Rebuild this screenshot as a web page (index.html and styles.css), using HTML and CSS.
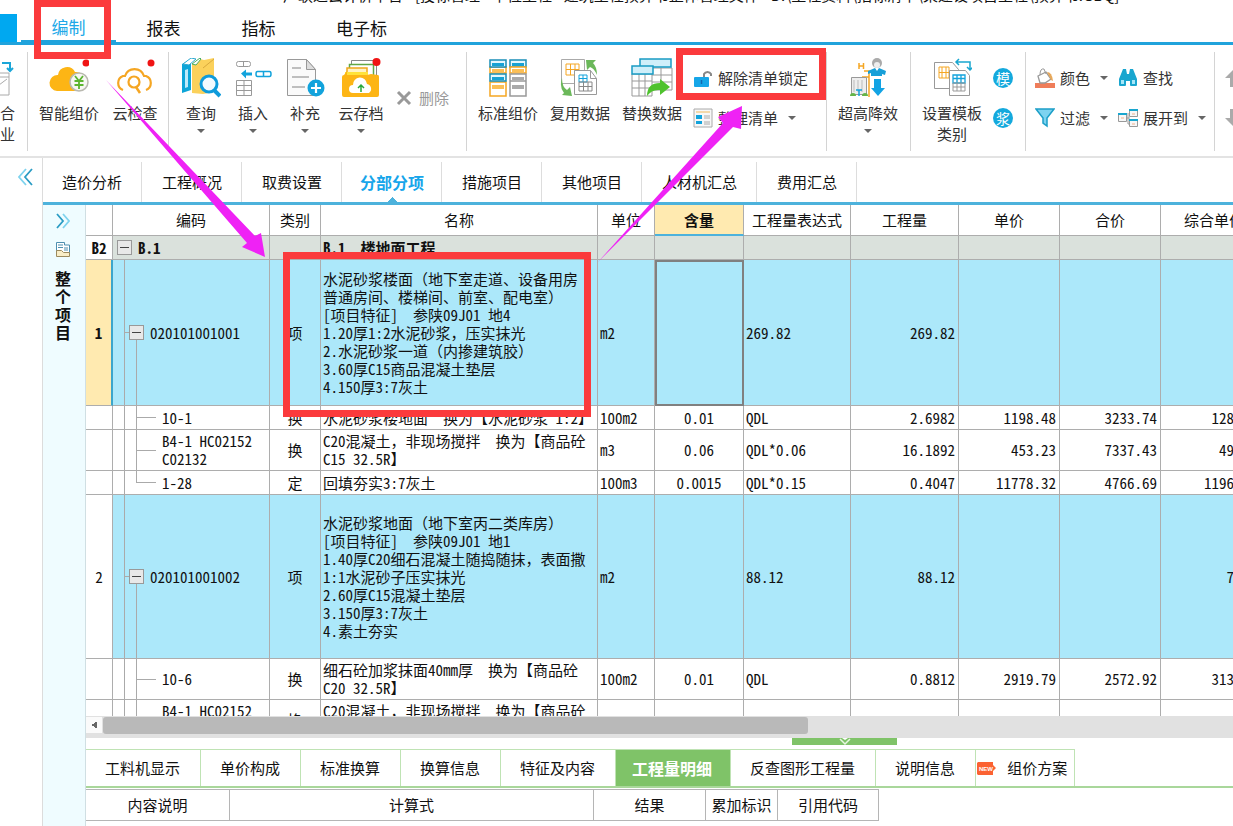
FILE: index.html
```html
<!DOCTYPE html>
<html lang="zh-CN">
<head>
<meta charset="utf-8">
<title>编制 - 分部分项</title>
<link rel="stylesheet" href="styles.css">
</head>
<body>
<header class="menubar">
  <div class="titletext">广联达云计价平台 - [投标管理 - 单位工程 - 建筑工程预算书整体管理文件 - D:\工程资料\招标清单\某建设项目工程\预算书.GBQ]</div>
  <nav class="menu">
    <button class="file" aria-label="文件"></button>
    <button class="menuitem active">编制</button>
    <button class="menuitem">报表</button>
    <button class="menuitem">指标</button>
    <button class="menuitem">电子标</button>
  </nav>
</header>

<section class="ribbon">
  <div class="group g0">
    <button class="big clipped">
      <svg width="38" height="38" viewBox="0 0 38 38"><path d="M6 20l8-6 18 0 0 22H6z" fill="#fff" stroke="#aaa"/><path d="M25 4h8v8m-3-3 3 3 3-3" fill="none" stroke="#1ba6d8" stroke-width="2"/><path d="M22 18h10M22 26l8-6" stroke="#aaa" fill="none"/></svg>
      <span>综合</span><span>专业</span>
    </button>
  </div>
  <div class="group g1">
    <button class="big w4">
      <svg width="40" height="38" viewBox="0 0 40 38"><path d="M8 32a8 8 0 0 1 1-16 9 9 0 0 1 17-3 9 9 0 0 1 2 19z" fill="#fdb515"/><circle cx="30" cy="23" r="9" fill="#f7f7f3" stroke="#b9b9b0" stroke-width="1.5"/><path d="M26 17l4 5 4-5M25.500 22h9M25.500 26h9M30 22v8" fill="none" stroke="#5cb531" stroke-width="1.800"/><circle cx="37" cy="4" r="3.500" fill="#f01414"/></svg>
      <span>智能组价</span>
    </button>
    <button class="big w3">
      <svg width="40" height="38" viewBox="0 0 40 38"><path d="M8 31a7.500 7.500 0 0 1 0-14h2a10 10 0 0 1 19 0h2a7.500 7.500 0 0 1 0 14" fill="none" stroke="#f5a623" stroke-width="2.200"/><circle cx="19" cy="23" r="5.500" fill="none" stroke="#f5a623" stroke-width="2.200"/><path d="M21 28l4 6" stroke="#f5a623" stroke-width="2.500"/><circle cx="36" cy="4" r="3.500" fill="#f01414"/></svg>
      <span>云检查</span>
    </button>
  </div>
  <div class="group g2">
    <button class="big w2">
      <svg width="40" height="40" viewBox="0 0 40 40"><path d="M1 6l9-5v31l-9 3z" fill="#0da5d8"/><path d="M4 12l3-1v18l-3 1z" fill="#bdeafa"/><path d="M2 6l8-6 5 1-7 6z" fill="#fff" stroke="#2da9d0"/><path d="M11 6l8-5 4 1 10-2v34l-11 2-11-1z" fill="#fbd15b"/><path d="M11 6l8-6 1 1-5 6z" fill="#fff" stroke="#4aae61"/><path d="M22 10L33 1" stroke="#d9a93d"/><circle cx="28" cy="26" r="8" fill="#f3fbff" stroke="#0f9bdb" stroke-width="3"/><path d="M33 32l6 6" stroke="#0f9bdb" stroke-width="4"/></svg>
      <span>查询</span><i class="caret"></i>
    </button>
    <button class="big w2">
      <svg width="40" height="40" viewBox="0 0 40 40" fill="none" stroke="#999"><rect x="3.500" y="3.500" width="14" height="5" rx="2"/><path d="M10.500 3.500v5"/><path d="M8 15.500l5-4v3h6v3h-6v3z" fill="#12a3dc" stroke="none"/><path d="M24.500 13.500h12q1.500 0 1.500 2.500t-1.500 2.500h-12q-1.500 0-1.500-2.500t1.500-2.500zM30.500 13.500v5" stroke="#12a3dc" stroke-width="1.500"/><path d="M3.500 22.500h15v15h-15zM3.500 27.500h15M3.500 32.500h15M11 22.500v15"/></svg>
      <span>插入</span><i class="caret"></i>
    </button>
    <button class="big w2">
      <svg width="40" height="40" viewBox="0 0 40 40"><path d="M2.500 1.500h19l9 10v26h-28z" fill="#fafafa" stroke="#999"/><path d="M21.500 1.500v10h9z" fill="#ddd" stroke="#999"/><path d="M7 10h9M7 19h17M7 29h13" stroke="#aaa" stroke-width="1.500"/><circle cx="31" cy="30" r="8.500" fill="#12a3dc"/><path d="M26 30h10M31 25v10" stroke="#fff" stroke-width="2.200"/></svg>
      <span>补充</span><i class="caret"></i>
    </button>
    <button class="big w3">
      <svg width="40" height="40" viewBox="0 0 40 40"><path d="M10.500 15V2.500h25V18" fill="#fff" stroke="#888"/><path d="M8.500 18V6.500h24V19" fill="#fff" stroke="#61a744" stroke-width="1.500"/><path d="M6 18V10h20v8" fill="#fff3c4" stroke="#f0a61b" stroke-width="1.500"/><path d="M4 14h23v5H4z" fill="#ffe23a"/><path d="M1 19q0-2 2-2l3-4v4h20l4-1 7 1q1 0 1 2v18q0 2-2 2H3q-2 0-2-2z" fill="#fdb515"/><path d="M12 35a4 4 0 0 1 0-8 7 7 0 0 1 14-1 5 5 0 0 1 2 9z" fill="#fff"/><path d="M20 34v-7m-3 3 3-3 3 3" fill="none" stroke="#28a83c" stroke-width="1.500"/><circle cx="35.500" cy="4" r="4" fill="#f01414"/></svg>
      <span>云存档</span><i class="caret"></i>
    </button>
    <div class="stack single">
      <button class="small dim"><svg width="18" height="18" viewBox="0 0 18 18"><path d="M3 3l12 12M15 3L3 15" stroke="#999" stroke-width="3"/></svg><span>删除</span></button>
    </div>
  </div>
  <div class="group g3">
    <button class="big w4">
      <svg width="40" height="40" viewBox="0 0 40 40" fill="#fff" stroke-width="1.500"><path d="M2 24h16v14H2zM2 9h16v6H2z" stroke="#f5a623"/><path d="M2 2h16v7H2zM2 16h16v7H2z" fill="#e5f7fd" stroke="#1a8fb8"/><path d="M4 5h12v3H4zM4 19h12v3H4z" fill="#17a2d4"/><path d="M4 11h12v3H4zM4 27h12v4H4z" fill="#fbbf55"/><path d="M22 2h16v7H22z" fill="#e5f7fd" stroke="#1a8fb8"/><path d="M22 9h16v6H22z" stroke="#f5a623"/><path d="M22 16h16v7H22zM22 23h16v15H22z" stroke="#999"/><path d="M24 5h12v3H24z" fill="#17a2d4"/><path d="M24 11h12v3H24z" fill="#fbbf55"/><path d="M24 19h12v3H24zM24 27h12v4H24z" fill="#aaa"/></svg>
      <span>标准组价</span>
    </button>
    <button class="big w4">
      <svg width="40" height="40" viewBox="0 0 40 40"><path d="M1.500 1.500h23v24h-23z" fill="#fff" stroke="#aaa"/><path d="M6 6h13v11H6zM10.500 6v11M15 6v11M6 11.500h13" fill="none" stroke="#f5a623"/><path d="M14.500 12.500h16l6 8v16h-22z" fill="#fff" stroke="#999"/><path d="M30.500 12.500v8h6" fill="none" stroke="#999"/><path d="M19 17h8v7h-8zM23 17v7M19 20.500h8" fill="none" stroke="#12a3dc"/><path d="M19 24h13v9H19zM23.500 24v9M28 24v9M19 28.500h13" fill="none" stroke="#888"/><path d="M26 2l10 0-3 3q4 4 4 12-3-7-7-8l-3 3z" fill="#6bb85a"/><path d="M2 20q0 9 5 12l3-3 2 9-10-1 2-2q-5-6-2-15z" fill="#6bb85a"/></svg>
      <span>复用数据</span>
    </button>
    <button class="big w4">
      <svg width="42" height="40" viewBox="0 0 42 40"><path d="M9 10h32v22H9zM19 10v22M30 10v22M9 17h32M9 24h32" fill="#fff" stroke="#999"/><path d="M1 16h20v22H1zM8 16v22M14 16v22M1 23h20M1 30h20" fill="#fff" stroke="#999"/><path d="M9 1h31v8H9z" fill="#cfeffa" stroke="#1a9cc4" stroke-width="1.500"/><path d="M1 8h21v8H1z" fill="#cfeffa" stroke="#1a9cc4" stroke-width="1.500"/><path d="M16 38q0-13 13-13v-4l10 8-10 8v-5q-8-1-13 6z" fill="#4fc22e"/></svg>
      <span>替换数据</span>
    </button>
    <div class="stack">
      <button class="small"><svg width="20" height="20" viewBox="0 0 20 20"><path d="M11 10V6a4 4 0 0 1 7 0v2" fill="none" stroke="#888" stroke-width="2"/><rect x="1" y="9" width="15" height="10" rx="1" fill="#16a6e8"/><path d="M8.500 12v4" stroke="#1468b0" stroke-width="1.500"/></svg><span>解除清单锁定</span></button>
      <button class="small"><svg width="20" height="20" viewBox="0 0 20 20"><path d="M1 1h18v18H1z" fill="#f7f7f7" stroke="#aaa"/><path d="M3 4h14" stroke="#f0b95c"/><path d="M3 7h6v4H3zM3 13h6v3H3z" fill="#12a3dc"/><path d="M11 8h6M11 10h6M11 14h6M11 16h6" stroke="#aaa"/></svg><span>整理清单</span><i class="caret"></i></button>
    </div>
  </div>
  <div class="group g4">
    <button class="big w4">
      <svg width="40" height="40" viewBox="0 0 40 40"><path d="M11 5v6M15.500 5v6M11 8h4.500M16 13h5v26M14 19h7" fill="none" stroke="#f5a623" stroke-width="1.500"/><path d="M3.500 19.500h15v17h-15z" fill="#eee" stroke="#999"/><path d="M6 22v12M10 22v12M14 22v12" stroke="#bbb"/><path d="M8 32h6M11 32v6" stroke="#12a3dc" stroke-width="1.500"/><path d="M2 38a3 3 0 0 1 6 0zM14 38a3 3 0 0 1 6 0z" fill="#65b548"/><circle cx="29" cy="5" r="5" fill="#aaa"/><circle cx="29" cy="7" r="3" fill="#eee"/><path d="M20 13l7-3 2 3 2-3 7 3-1 4-3-1v2H23v-3l-3 1z" fill="#179fd8"/><path d="M26 21h7v9h4l-7 8-7-8h3z" fill="#12a3e4"/></svg>
      <span>超高降效</span><i class="caret"></i>
    </button>
  </div>
  <div class="group g5">
    <button class="big w4">
      <svg width="40" height="40" viewBox="0 0 40 40"><path d="M2.500 4.500h18l6 7v19h-24z" fill="#fff" stroke="#999"/><path d="M7 9h10v11H7zM10 9v11M14 9v11M7 14.500h10" fill="none" stroke="#f5a623"/><path d="M17.500 12.500h16l4 5v20h-20z" fill="#fff" stroke="#999"/><path d="M21 17h12v8H21zM25 17v8M29 17v8M21 20.500h12" fill="none" stroke="#12a3dc" stroke-width="1.300"/><path d="M21 25h12v8H21zM25 25v8M29 25v8M21 29h12" fill="none" stroke="#999"/><path d="M24 4h14v8M27 1l-3 3 3 3M35 9l3 3 3-3" fill="none" stroke="#19a6cf" stroke-width="1.500"/></svg>
      <span>设置模板</span><span>类别</span>
    </button>
    <div class="stack">
      <button class="small"><span class="round">模</span></button>
      <button class="small"><span class="round">浆</span></button>
    </div>
  </div>
  <div class="group g6">
    <div class="stack">
      <button class="small"><svg width="20" height="20" viewBox="0 0 20 20"><path d="M0 15h20v5H0z" fill="#ef7d5a"/><path d="M3 8l8-4 5 7-6 4H5z" fill="#fff" stroke="#999" stroke-width="1.300"/><path d="M5 7q0-7 4-6l2 5" fill="none" stroke="#999"/><path d="M12 4q5 0 6 9l-2-1z" fill="#e7a85b"/></svg><span>颜色</span><i class="caret"></i></button>
      <button class="small"><svg width="20" height="20" viewBox="0 0 20 20"><path d="M1 1h18l-7 9v8l-4-3v-5z" fill="#7ed3f0" stroke="#1c9fc8" stroke-width="1.500"/></svg><span>过滤</span><i class="caret"></i></button>
    </div>
    <div class="stack">
      <button class="small"><svg width="20" height="20" viewBox="0 0 20 20"><path d="M5 1h3l1 5h2l1-5h3l4 10v6q0 1-1 1h-5q-1 0-1-1v-4H8v4q0 1-1 1H2q-1 0-1-1v-6z" fill="#19a6cf"/><path d="M3 12h3v4H3zM14 12h3v4h-3z" fill="#a5e6f8"/></svg><span>查找</span></button>
      <button class="small"><svg width="20" height="20" viewBox="0 0 20 20"><path d="M9 10h3M10 5v11h3" fill="none" stroke="#999"/><path d="M.5 5.500h8v8h-8zM11.500 1.500h8v7h-8zM11.500 11.500h8v7h-8z" fill="#f7f7f7" stroke="#999"/><path d="M0 5h9v2H0zM11 1h9v2h-9zM11 11h9v2h-9z" fill="#19a6cf"/><path d="M3 10h3M14 6h3M14 16h3" stroke="#f0b08c"/></svg><span>展开到</span><i class="caret"></i></button>
    </div>
  </div>
  <div class="group g7">
    <div class="stack">
      <button class="small" aria-label="上移"><svg width="20" height="20" viewBox="0 0 20 20"><path d="M10 0l10 10h-5v9H5v-9H0z" fill="#aaa"/></svg></button>
      <button class="small" aria-label="下移"><svg width="20" height="20" viewBox="0 0 20 20"><path d="M10 20L0 10h5V1h10v9h5z" fill="#aaa"/></svg></button>
    </div>
  </div>
</section>

<main class="work">
  <aside class="gutter">
    <button aria-label="收起"><svg width="16" height="18" viewBox="0 0 16 18" fill="none" stroke-width="1.800"><path d="M8 1L1 9l7 8" stroke="#7fd3ee"/><path d="M14 1L7 9l7 8" stroke="#2a9cc4"/></svg></button>
  </aside>
  <div class="project">
    <nav class="tabs">
      <button>造价分析</button><button>工程概况</button><button>取费设置</button><button class="active">分部分项</button><button>措施项目</button><button>其他项目</button><button>人材机汇总</button><button>费用汇总</button>
    </nav>
    <div class="body">
      <aside class="side">
        <button aria-label="展开"><svg width="14" height="16" viewBox="0 0 14 16" fill="none" stroke-width="1.800"><path d="M1 1l6 7-6 7" stroke="#2a9cc4"/><path d="M7 1l6 7-6 7" stroke="#7fd3ee"/></svg></button>
        <svg width="16" height="16" viewBox="0 0 16 16"><path d="M1.500 12V1.500h8V4h5v8" fill="#fff" stroke="#4d8fb0"/><path d="M3 4h5M3 6.500h5M9 7h4M9 9h4" stroke="#4d8fb0"/><path d="M1.500 9.500h5l2 2h6v4h-13z" fill="#f9edc6" stroke="#9c8a5e"/></svg>
        <strong>整个项目</strong>
      </aside>
      <div class="content">
        <div class="gridpane">
          <table class="grid">
            <colgroup><col class="c1"><col class="c2"><col class="c3"><col class="c4"><col class="c5"><col class="c6"><col class="c7"><col class="c8"><col class="c9"><col class="c9"><col class="c7"></colgroup>
            <thead><tr><th></th><th>编码</th><th>类别</th><th>名称</th><th>单位</th><th class="hot">含量</th><th>工程量表达式</th><th>工程量</th><th>单价</th><th>合价</th><th>综合单价</th></tr></thead>
            <tbody>
              <tr class="section"><td class="no">B2</td><td class="code root"><div><button class="toggle" aria-label="折叠"></button>B.1</div></td><td></td><td class="name">B.1<span class="wide">　</span>楼地面工程</td><td></td><td></td><td></td><td></td><td></td><td></td><td></td></tr>
              <tr class="item first"><td class="no current">1</td><td class="code parent"><div><button class="toggle" aria-label="折叠"></button>020101001001</div></td><td class="mid">项</td><td class="name">水泥砂浆楼面<span class="wide">（</span>地下室走道、设备用房<br>普通房间、楼梯间、前室、配电室<span class="wide">）</span><br>[项目特征]<span class="wide">　</span>参陕09J01 地4<br>1.20厚1:2水泥砂浆<span class="wide">，</span>压实抹光<br>2.水泥砂浆一道<span class="wide">（</span>内掺建筑胶<span class="wide">）</span><br>3.60厚C15商品混凝土垫层<br>4.150厚3:7灰土</td><td>m2</td><td class="cursor"></td><td>269.82</td><td class="num">269.82</td><td></td><td></td><td></td></tr>
              <tr class="low"><td></td><td class="code child">10-1</td><td class="mid">换</td><td class="name">水泥砂浆楼地面<span class="wide">　</span>换为【水泥砂浆 1:2】</td><td>100m2</td><td class="mid">0.01</td><td>QDL</td><td class="num">2.6982</td><td class="num">1198.48</td><td class="num">3233.74</td><td class="num">1284.28</td></tr>
              <tr class="tall"><td></td><td class="code child">B4-1 HC02152<br>C02132</td><td class="mid">换</td><td class="name">C20混凝土<span class="wide">，</span>非现场搅拌<span class="wide">　</span>换为【商品砼<br>C15 32.5R】</td><td>m3</td><td class="mid">0.06</td><td>QDL*0.06</td><td class="num">16.1892</td><td class="num">453.23</td><td class="num">7337.43</td><td class="num">492.17</td></tr>
              <tr class="low"><td></td><td class="code child last">1-28</td><td class="mid">定</td><td class="name">回填夯实3:7灰土</td><td>100m3</td><td class="mid">0.0015</td><td>QDL*0.15</td><td class="num">0.4047</td><td class="num">11778.32</td><td class="num">4766.69</td><td class="num">11963.45</td></tr>
              <tr class="item second"><td class="no">2</td><td class="code parent"><div><button class="toggle" aria-label="折叠"></button>020101001002</div></td><td class="mid">项</td><td class="name">水泥砂浆地面<span class="wide">（</span>地下室丙二类库房<span class="wide">）</span><br>[项目特征]<span class="wide">　</span>参陕09J01 地1<br>1.40厚C20细石混凝土随捣随抹<span class="wide">，</span>表面撒<br>1:1水泥砂子压实抹光<br>2.60厚C15混凝土垫层<br>3.150厚3:7灰土<br>4.素土夯实</td><td>m2</td><td></td><td>88.12</td><td class="num">88.12</td><td></td><td></td><td class="num">78.56</td></tr>
              <tr class="tall"><td></td><td class="code child">10-6</td><td class="mid">换</td><td class="name">细石砼加浆抹面40mm厚<span class="wide">　</span>换为【商品砼<br>C20 32.5R】</td><td>100m2</td><td class="mid">0.01</td><td>QDL</td><td class="num">0.8812</td><td class="num">2919.79</td><td class="num">2572.92</td><td class="num">3131.46</td></tr>
              <tr class="tall"><td></td><td class="code child">B4-1 HC02152<br>C02132</td><td class="mid">换</td><td class="name">C20混凝土<span class="wide">，</span>非现场搅拌<span class="wide">　</span>换为【商品砼<br>C15 32.5R】</td><td></td><td></td><td></td><td></td><td></td><td></td><td></td></tr>
            </tbody>
          </table>
        </div>
        <div class="scroll"><button aria-label="向左滚动"></button><div class="thumb"></div></div>
        <div class="splitter"><button aria-label="折叠下方面板"><svg width="12" height="8" viewBox="0 0 12 8"><path d="M3 0h6L6 2z" fill="#fff"/><path d="M1 1l5 5 5-5" fill="none" stroke="#e8f7e2" stroke-width="1.500"/></svg></button></div>
        <nav class="detailtabs">
          <button>工料机显示</button><button>单价构成</button><button>标准换算</button><button>换算信息</button><button>特征及内容</button><button class="active">工程量明细</button><button>反查图形工程量</button><button>说明信息</button><button class="new"><svg width="19" height="13" viewBox="0 0 19 13"><path d="M1 0h15v3l3 3-3 3v4H1l-1-1V1z" fill="#fb6232"/><text x="2" y="9" class="newtext">NEW</text></svg>组价方案</button>
        </nav>
        <table class="detail">
          <colgroup><col class="d1"><col class="d2"><col class="d3"><col class="d4"><col class="d5"></colgroup>
          <tr><th>内容说明</th><th>计算式</th><th>结果</th><th>累加标识</th><th>引用代码</th></tr>
        </table>
      </div>
    </div>
  </div>
</main>

<svg class="marks" width="1233" height="826" viewBox="0 0 1233 826">
  <g fill="none" stroke="#fb3a3c" stroke-width="7"><path d="M37.500 3.500h70v52h-70z"/><path d="M679.500 51.500h143v45h-143z"/><path d="M286.500 255.500h301v158h-301z"/></g>
  <path d="M106 80L255 236l6-3 4 24-23-10 5-4z" fill="#ef22f5"/>
  <path d="M598 262L723 123l-5-6 24-11-1 23-8-2z" fill="#ef22f5"/>
</svg>
</body>
</html>
```
FILE: styles.css
```css
* { box-sizing: border-box; }
body {
  margin: 0;
  height: 100vh;
  display: flex;
  flex-direction: column;
  overflow: hidden;
  position: relative;
  background: #fff;
  color: #111;
  font: 15px/18px "Noto Sans CJK SC", sans-serif;
}
button {
  margin: 0;
  padding: 0;
  border: 0;
  background: none;
  color: inherit;
  font: inherit;
}
svg { display: block; flex: none; }

/* menu */
.menubar { flex: none; border-bottom: 3px solid #20a3dc; }
.titletext {
  height: 4px;
  margin-bottom: 10px;
  padding-left: 283px;
  overflow: hidden;
  display: flex;
  align-items: flex-end;
  white-space: nowrap;
}
.menu { display: flex; height: 28px; }
.file { width: 17px; background: #00a8f0; margin-right: 4px; }
.menuitem { width: 95px; font-size: 17px; }
.menuitem:last-child { width: 111px; }
.menuitem.active { color: #20a8e8; border-bottom: 2px solid #20a3dc; }

/* ribbon */
.ribbon {
  flex: none;
  display: flex;
  min-height: 113px;
  padding: 7px 0 5px;
  border-bottom: 2px solid #e3e3e3;
  color: #333;
  overflow: hidden;
}
.group { flex: none; display: flex; padding-top: 6px; border-right: 1px solid #d4d4d4; }
.big { display: flex; flex-direction: column; align-items: center; height: 92px; line-height: 21px; white-space: nowrap; }
.big svg { height: 40px; margin-bottom: 4px; }
.w2 { width: 52px; }
.w3 { width: 60px; }
.w4 { width: 72px; }
.clipped { width: 15px; align-items: flex-end; }
.caret {
  width: 0;
  height: 0;
  border: 4px solid transparent;
  border-top-color: #666;
  border-bottom-width: 0;
}
.big .caret { margin-top: 6px; }
.g0 { width: 28px; overflow: hidden; }
.g1 { width: 141px; padding-left: 5px; }
.g2 { width: 298px; padding-left: 6px; }
.g3 { width: 360px; padding-left: 5px; }
.g4 { width: 84px; padding-left: 5px; }
.g5 { width: 115px; padding-left: 5px; }
.g6 { width: 189px; padding-left: 9px; gap: 10px; }
.g7 { padding-left: 10px; border: 0; }
.stack { display: flex; flex-direction: column; }
.stack.single { justify-content: center; height: 80px; padding-left: 4px; }
.g3 .stack, .g5 .stack { padding-left: 5px; }
.small { display: flex; align-items: center; gap: 5px; height: 40px; white-space: nowrap; }
.small .caret { margin-left: 5px; }
.dim { color: #999; gap: 6px; }
.round {
  width: 20px;
  height: 20px;
  border-radius: 50%;
  background: #14a9dd;
  color: #fff;
  font-size: 14px;
  line-height: 20px;
}

/* workspace */
.work { flex: 1; display: flex; min-height: 0; }
.gutter { width: 42px; flex: none; padding: 10px 0 0 18px; }
.project { flex: 1; min-width: 0; display: flex; flex-direction: column; border-left: 1px solid #dcdcdc; }
.tabs { flex: none; display: flex; padding-top: 4px; border-bottom: 3px solid #4db2dc; }
.tabs button { height: 40px; padding: 0 19px 0 20px; border-right: 1px solid #ddd; white-space: nowrap; }
.tabs .active {
  padding: 0 17px 0 18px;
  color: #16a5ea;
  font-size: 16px;
  font-weight: 700;
  background: conic-gradient(from 135deg at 50% 0, #4db2dc 90deg, transparent 0) center bottom / 10px 5px no-repeat;
}
.tabs button:first-child { padding-left: 19px; }
.body { flex: 1; display: flex; min-height: 0; }
.side { width: 42px; flex: none; display: flex; flex-direction: column; align-items: center; padding: 8px 2px 0 0; gap: 12px; background: #effcff; }
.side strong { width: 16px; font-size: 16px; }
.content { flex: 1; min-width: 0; display: flex; flex-direction: column; border-left: 1px solid #d0dfe3; }
.gridpane { flex: 1; min-height: 0; overflow: hidden; }

/* half-width Latin keeps digits on a half-em pitch */
.grid { width: 100%; min-width: 1182px; table-layout: fixed; border-spacing: 0; font-feature-settings: "hwid"; text-spacing-trim: space-all; }
.wide { font-feature-settings: normal; }
.c1 { width: 27px; }
.c2 { width: 157px; }
.c3 { width: 51px; }
.c4 { width: 277px; }
.c5 { width: 57px; }
.c6 { width: 89px; }
.c7 { width: 107px; }
.c8 { width: 108px; }
.c9 { width: 101px; }
.grid th, .grid td { padding: 0 2px; border-right: 1px solid #adadad; border-bottom: 1px solid #adadad; text-align: left; white-space: nowrap; overflow: hidden; }
.grid th { height: 31px; font-weight: 400; text-align: center; }
.grid .hot { background: #ffeab0; font-weight: 700; border-bottom: 2px solid #4db2dc; }
.section { height: 24px; background: #dae1dc; font-weight: 700; }
.item { background: #ace8fa; }
.first { height: 146px; }
.second { height: 164px; }
.low { height: 24px; }
.tall { height: 41px; }
.grid .no { padding: 0; text-align: center; background: #fff; }
.grid .current { background: #ffeab0; font-weight: 700; border-right: 2px solid #3aa6cc; }
.grid .mid { text-align: center; }
.grid .num { text-align: right; padding-right: 3px; }
.grid .cursor { border: 2px solid #808080; }
.code div { display: flex; align-items: center; gap: 6px; }
.toggle {
  width: 15px;
  height: 15px;
  border: 1px solid #999;
  background: linear-gradient(#444, #444) center / 9px 1px no-repeat, #e8e8e8;
}
.grid .root { padding-left: 4px; }
.grid .parent {
  padding-left: 16px;
  background:
    linear-gradient(#aaa, #aaa) 11px 0 / 1px 100% no-repeat,
    linear-gradient(#aaa, #aaa) 23px 100% / 1px 50% no-repeat,
    linear-gradient(#aaa, #aaa) 11px 50% / 5px 1px no-repeat;
}
.grid .child {
  padding-left: 49px;
  background:
    linear-gradient(#aaa, #aaa) 11px 0 / 1px 100% no-repeat,
    linear-gradient(#aaa, #aaa) 23px 0 / 1px 100% no-repeat,
    linear-gradient(#aaa, #aaa) 23px 50% / 20px 1px no-repeat;
}
.grid .last { background-size: 1px 100%, 1px 50%, 20px 1px; }

/* scrollbar and splitter */
.scroll { flex: none; display: flex; height: 22px; padding-top: 1px; background: #e1e1e1; }
.scroll button {
  width: 16px;
  height: 16px;
  background: conic-gradient(from 60deg at 0 50%, #666 60deg, transparent 0) center / 6px 10px no-repeat, #fafafa;
}
.thumb { width: 61.5%; height: 17px; background: #b9b9b9; border-radius: 3px; margin-left: 1px; }
.splitter { flex: none; height: 11px; display: flex; justify-content: center; padding-left: 370px; }
.splitter button { width: 105px; height: 7px; background: #7fc368; display: flex; justify-content: center; }

.detailtabs { flex: none; display: flex; border-bottom: 2px solid #a9d79b; margin-bottom: 1px; }
.detailtabs button {
  height: 37px;
  padding: 0 20px 0 19px;
  border: 1px solid #bfe3b4;
  border-width: 1px 1px 0 0;
  white-space: nowrap;
}
.detailtabs .active { padding: 0 18px 0 16px; background: #7fc368; color: #fff; font-size: 16px; font-weight: 700; }
.detailtabs .new { display: flex; align-items: center; gap: 11px; padding: 0 7px 0 1px; }
.newtext { font: 700 6px "Liberation Sans", sans-serif; fill: #fff; }
.detail { flex: none; width: 793px; table-layout: fixed; border-spacing: 0; margin-bottom: 5px; }
.detail th { height: 32px; padding: 0; font-weight: 400; border: 1px solid #b5b5b5; border-left: 0; }
.d1 { width: 144px; }
.d2 { width: 364px; }
.d3 { width: 112px; }
.d4 { width: 72px; }
.d5 { width: 101px; }

.marks { position: absolute; left: 0; top: 0; pointer-events: none; }
```
